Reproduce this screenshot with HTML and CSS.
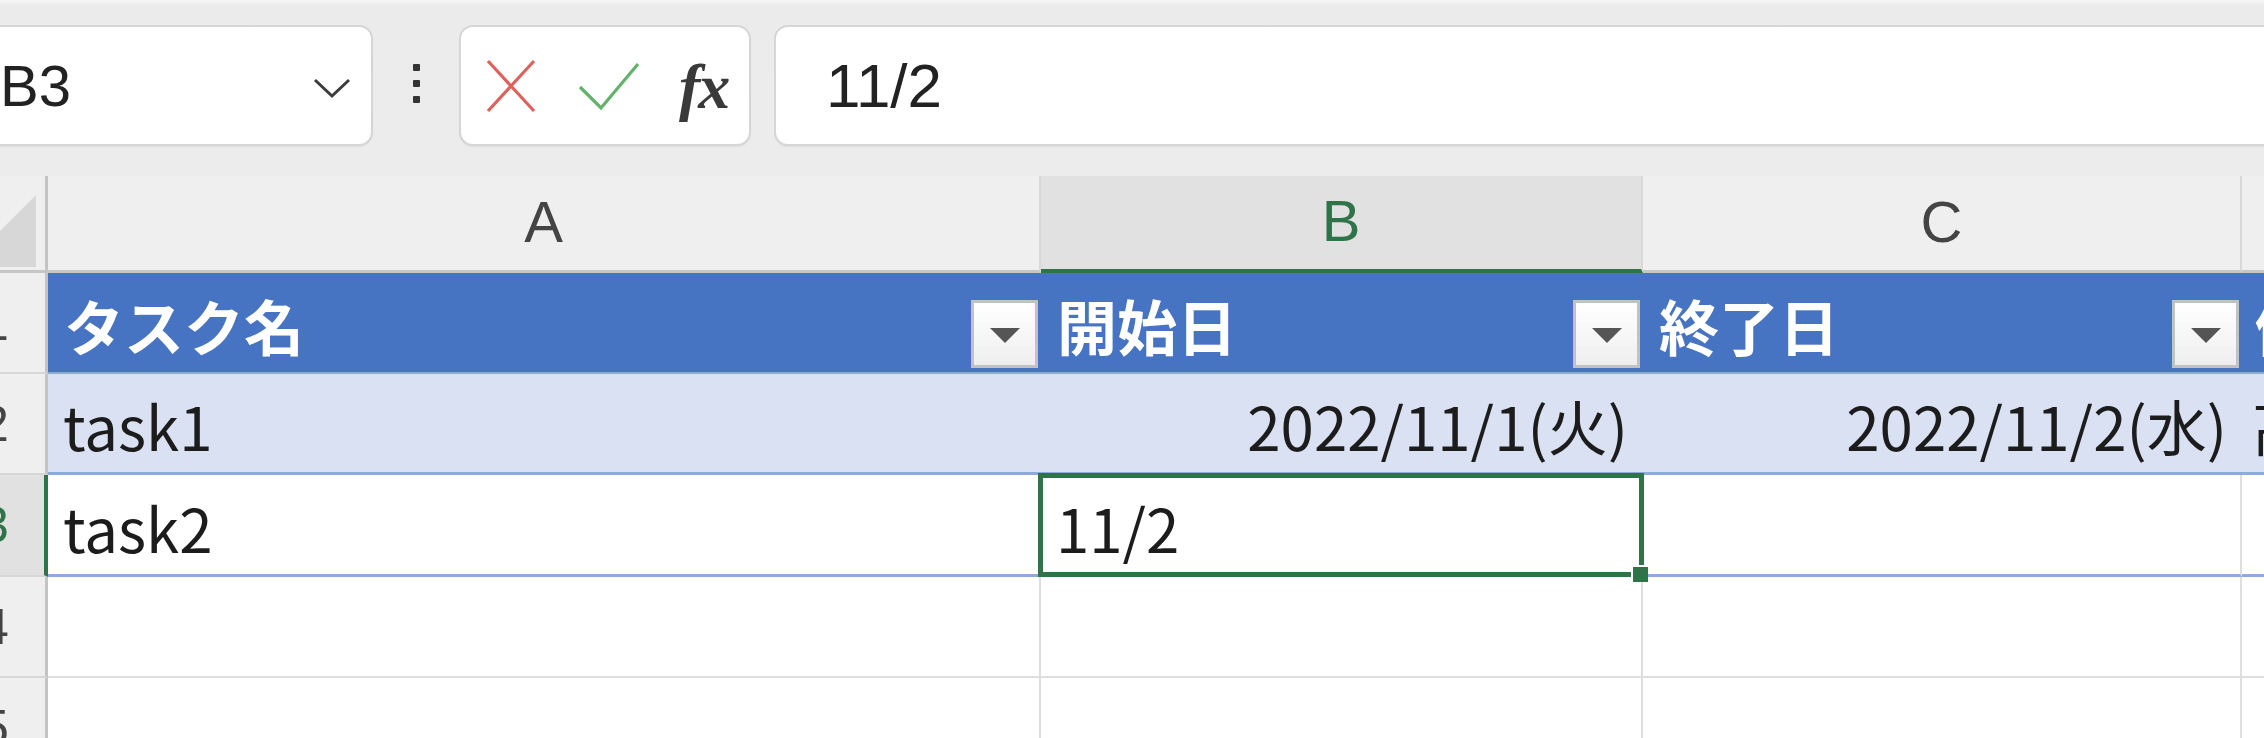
FILE: index.html
```html
<!DOCTYPE html>
<html lang="ja">
<head>
<meta charset="utf-8">
<title>Excel</title>
<link rel="stylesheet" href="styles.css">
</head>
<body>
<div class="app">
  <div class="toolbar">
    <div class="namebox">
      <span class="ref">B3</span>
      <svg class="chev" width="40" height="22" viewBox="0 0 40 22"><polyline points="3,3 20,19 37,3" fill="none" stroke="#3c3c3c" stroke-width="3"/></svg>
    </div>
    <div class="dots"><i></i><i></i><i></i></div>
    <div class="fxbox">
      <svg class="ico" width="52" height="56" viewBox="0 0 52 56"><path d="M3 3 L49 53 M49 3 L3 53" stroke="#e0605c" stroke-width="3.2" fill="none"/></svg>
      <svg class="ico" width="64" height="52" viewBox="0 0 64 52"><path d="M3 27 L24 48 L61 4" stroke="#62b26a" stroke-width="3.2" fill="none"/></svg>
      <span class="fx">fx</span>
    </div>
    <div class="formula">11/2</div>
  </div>

  <div class="sheet">
    <div class="corner"><svg width="48" height="95" viewBox="0 0 48 95"><polygon points="36,19 36,91 -36,91" fill="#d7d7d7"/></svg></div>
    <div class="ch">A</div>
    <div class="ch ch-sel">B</div>
    <div class="ch">C</div>
    <div class="ch ch-last"></div>

    <div class="rh"><span>1</span></div>
    <div class="c th"><span class="tt">タスク名</span><span class="filter"></span></div>
    <div class="c th"><span class="tt">開始日</span><span class="filter"></span></div>
    <div class="c th"><span class="tt">終了日</span><span class="filter"></span></div>
    <div class="c th th-d"><span class="tt">優先度</span></div>

    <div class="rh"><span>2</span></div>
    <div class="c band">task1</div>
    <div class="c band num">2022/11/1(火)</div>
    <div class="c band num">2022/11/2(水)</div>
    <div class="c band d">高</div>

    <div class="rh rh-sel"><span>3</span></div>
    <div class="c r3">task2</div>
    <div class="c r3 sel">11/2<span class="handle"></span></div>
    <div class="c r3"></div>
    <div class="c r3"></div>

    <div class="rh"><span>4</span></div>
    <div class="c g"></div>
    <div class="c g"></div>
    <div class="c g"></div>
    <div class="c g"></div>

    <div class="rh"><span>5</span></div>
    <div class="c g"></div>
    <div class="c g"></div>
    <div class="c g"></div>
    <div class="c g"></div>
  </div>
</div>
</body>
</html>
```

FILE: styles.css
```css
* { box-sizing: border-box; }
html, body { margin: 0; padding: 0; }
body {
  width: 2264px;
  height: 738px;
  overflow: hidden;
  background: #efefef;
  font-family: "Liberation Sans", "Noto Sans CJK JP", sans-serif;
  color: #1e1e1e;
}
.app { width: 2264px; height: 738px; overflow: hidden; }

/* toolbar */
.toolbar {
  display: flex;
  align-items: stretch;
  height: 176px;
  padding: 25px 0 30px 0;
  background: linear-gradient(#f6f6f6 0, #ebebeb 6px, #ececec 100%);
}
.namebox, .fxbox, .formula {
  background: #fff;
  border: 2px solid #d6d6d6;
  border-radius: 14px;
  box-shadow: 0 1px 1px rgba(0,0,0,0.06);
}
.namebox {
  width: 400px;
  margin-left: -27px;
  display: flex;
  align-items: center;
  padding-left: 25px;
  padding-right: 19px;
}
.ref { font-size: 58px; line-height: 1; flex: 1; color: #222; }
.chev { display: block; margin-top: 4px; }
.dots {
  width: 86px;
  display: flex;
  flex-direction: column;
  align-items: center;
  justify-content: center;
  gap: 9px;
  padding-bottom: 4px;
}
.dots i { display: block; width: 7px; height: 7px; background: #333; border-radius: 1px; }
.fxbox {
  width: 292px;
  display: flex;
  align-items: center;
  padding-left: 24px;
  gap: 38px;
}
.fxbox .ico { display: block; }
.fxbox .ico + .ico { margin-left: 2px; }
.fx {
  font-family: "Liberation Serif", "DejaVu Serif", serif;
  font-style: italic;
  font-weight: bold;
  font-size: 64px;
  line-height: 1;
  color: #3a3a3a;
  margin-left: 0;
  margin-top: 2px;
  letter-spacing: -2px;
}
.formula {
  flex: 1;
  margin-left: 23px;
  margin-right: -30px;
  display: flex;
  align-items: center;
  padding-left: 50px;
  font-size: 62px;
  color: #222;
}

/* sheet */
.sheet {
  display: grid;
  grid-template-columns: 48px 993px 602px 599px 200px;
  grid-template-rows: 97px 101px 101px 102px 101px 101px;
  background: #fff;
}
.corner {
  background: #efefef;
  border-right: 3px solid #c4c4c4;
  border-bottom: 3px solid #c6c6c6;
  overflow: hidden;
}
.corner svg { display: block; }
.ch {
  background: #efefef;
  border-right: 2px solid #d8d8d8;
  border-bottom: 3px solid #c6c6c6;
  display: flex;
  align-items: center;
  justify-content: center;
  font-size: 58px;
  color: #444;
  padding-bottom: 4px;
}
.ch-sel {
  background: #e1e1e1;
  border-bottom: 4px solid #2f7448;
  color: #2f7448;
}
.rh {
  background: #efefef;
  border-right: 3px solid #c4c4c4;
  border-bottom: 2px solid #d6d6d6;
  overflow: hidden;
  display: flex;
  align-items: center;
}
.rh span {
  display: block;
  flex: none;
  width: 60px;
  margin-left: -35px;
  text-align: center;
  font-size: 50px;
  color: #444;
}
.rh-sel { background: #e1e1e1; border-right: 4px solid #2f7448; }
.rh-sel span { color: #2f7448; }

.c {
  display: flex;
  align-items: flex-end;
  padding: 0 15px 17px 15px;
  font-family: "Noto Sans CJK JP", "Liberation Sans", sans-serif;
  font-size: 60px;
  line-height: 60px;
  white-space: nowrap;
  overflow: hidden;
  color: #1c1c1c;
}
.th {
  background: #4673c2;
  color: #fff;
  font-weight: bold;
  padding: 0 3px 4px 16px;
  border-bottom: 2px solid #8ea9db;
}
.th .tt { flex: 1; padding-bottom: 13px; }
.th-d { padding-left: 13px; }
.filter {
  position: relative;
  width: 67px;
  height: 68px;
  flex: none;
  background: linear-gradient(#ffffff, #eeeeee);
  border: 3px solid #c2c2c2;
}
.filter::after {
  content: "";
  position: absolute;
  left: 50%;
  top: 50%;
  margin-left: -15px;
  margin-top: -6px;
  border-left: 15px solid transparent;
  border-right: 15px solid transparent;
  border-top: 15px solid #555;
}
.band { background: #d9e1f2; border-bottom: 3px solid #8ea9db; }
.num { justify-content: flex-end; }
.d { padding-left: 10px; }
.r3 { background: #fff; border-bottom: 3px solid #8ea9db; border-right: 2px solid #dedede; }
.g { border-right: 2px solid #dedede; border-bottom: 2px solid #dedede; }
.sel { position: relative; overflow: visible; }
.sel::after {
  content: "";
  position: absolute;
  left: -3px;
  top: -2px;
  right: -3px;
  bottom: -3px;
  border: 5px solid #2f7448;
  pointer-events: none;
}
.handle {
  position: absolute;
  right: -7px;
  bottom: -8px;
  width: 17px;
  height: 17px;
  background: #2f7448;
  border-left: 2px solid #fff;
  border-top: 2px solid #fff;
  z-index: 2;
}
```
